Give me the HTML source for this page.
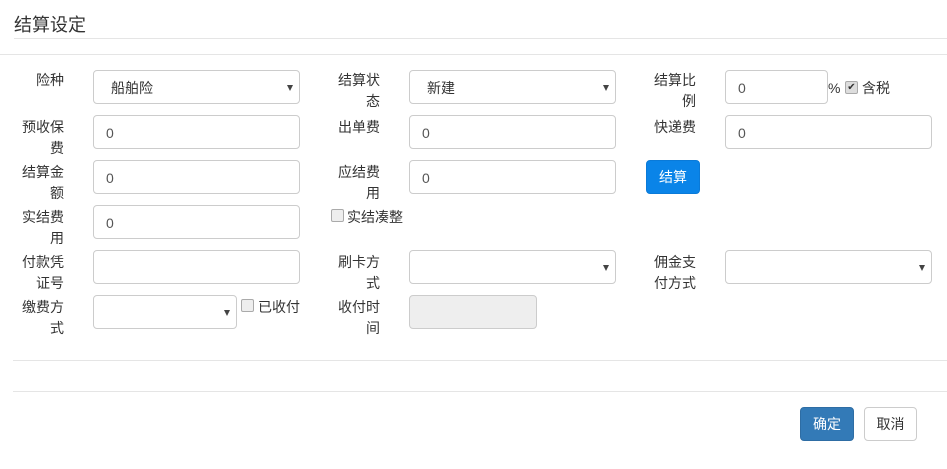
<!DOCTYPE html><html><head><meta charset="utf-8"><style>
body{margin:0;width:947px;height:469px;background:#fff;font-family:"Liberation Sans","Noto Sans CJK SC",sans-serif;font-size:14px;color:#333;position:relative;overflow:hidden}
.a{position:absolute}
.l{position:absolute;width:44px;text-align:right;line-height:21px;word-break:break-all}
.i{position:absolute;height:34px;box-sizing:border-box;border:1px solid #ccc;border-radius:4px;background:#fff;padding:0 12px;line-height:34px;font-size:14px;color:#555}
.s::after{content:"";position:absolute;right:6px;top:14px;border:3px solid transparent;border-top:6px solid #444;border-bottom:0}
.cb{position:absolute;width:11px;height:11px;border:1px solid #aaa;border-radius:2px;background:#eee}
.hr{position:absolute;height:1px;background:#e5e5e5}
.btn{position:absolute;height:34px;border-radius:4px;box-sizing:border-box;text-align:center;line-height:32px}
</style></head><body>
<div class="a" style="left:14px;top:13px;font-size:18px;line-height:24px">结算设定</div>
<div class="hr" style="left:14px;right:0;top:38px"></div>
<div class="hr" style="left:0;right:0;top:54px"></div>

<div class="l" style="left:20px;top:70px">险种</div>
<div class="i s" style="left:93px;top:70px;width:207px;padding-left:17px;color:#333">船舶险</div>
<div class="l" style="left:336px;top:70px">结算状态</div>
<div class="i s" style="left:409px;top:70px;width:207px;padding-left:17px;color:#333">新建</div>
<div class="l" style="left:652px;top:70px">结算比例</div>
<div class="i" style="left:725px;top:70px;width:103px">0</div>
<div class="a" style="left:828px;top:79px;line-height:18px">%</div>
<div class="cb" style="left:845px;top:81px;background:#ddd;font-size:10px;line-height:11px;text-align:center;color:#333">✔</div>
<div class="a" style="left:862px;top:79px;line-height:18px">含税</div>

<div class="l" style="left:20px;top:117px">预收保费</div>
<div class="i" style="left:93px;top:115px;width:207px">0</div>
<div class="l" style="left:336px;top:117px">出单费</div>
<div class="i" style="left:409px;top:115px;width:207px">0</div>
<div class="l" style="left:652px;top:117px">快递费</div>
<div class="i" style="left:725px;top:115px;width:207px">0</div>

<div class="l" style="left:20px;top:162px">结算金额</div>
<div class="i" style="left:93px;top:160px;width:207px">0</div>
<div class="l" style="left:336px;top:162px">应结费用</div>
<div class="i" style="left:409px;top:160px;width:207px">0</div>
<div class="btn" style="left:646px;top:160px;width:54px;background:#0a84e8;color:#fff;border:1px solid #0a7ad8">结算</div>

<div class="l" style="left:20px;top:207px">实结费用</div>
<div class="i" style="left:93px;top:205px;width:207px">0</div>
<div class="cb" style="left:331px;top:209px"></div>
<div class="a" style="left:347px;top:207px;line-height:20px">实结凑整</div>

<div class="l" style="left:20px;top:252px">付款凭证号</div>
<div class="i" style="left:93px;top:250px;width:207px"></div>
<div class="l" style="left:336px;top:252px">刷卡方式</div>
<div class="i s" style="left:409px;top:250px;width:207px"></div>
<div class="l" style="left:652px;top:252px">佣金支付方式</div>
<div class="i s" style="left:725px;top:250px;width:207px"></div>

<div class="l" style="left:20px;top:297px">缴费方式</div>
<div class="i s" style="left:93px;top:295px;width:144px"></div>
<div class="cb" style="left:241px;top:299px"></div>
<div class="a" style="left:258px;top:297px;line-height:20px">已收付</div>
<div class="l" style="left:336px;top:297px">收付时间</div>
<div class="i" style="left:409px;top:295px;width:128px;background:#eee"></div>

<div class="hr" style="left:13px;right:0;top:360px"></div>
<div class="hr" style="left:13px;right:0;top:391px"></div>
<div class="btn" style="left:800px;top:407px;width:54px;background:#337ab7;color:#fff;border:1px solid #2e6da4">确定</div>
<div class="btn" style="left:864px;top:407px;width:53px;background:#fff;color:#333;border:1px solid #ccc">取消</div>
</body></html>
